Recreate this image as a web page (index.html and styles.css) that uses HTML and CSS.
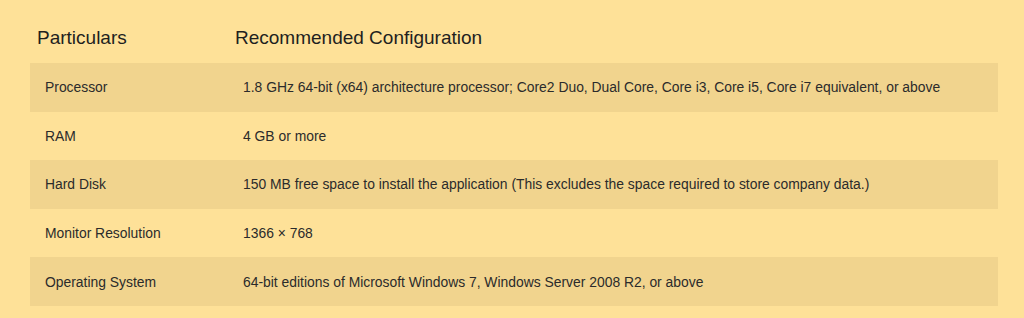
FILE: index.html
```html
<!DOCTYPE html>
<html>
<head>
<meta charset="utf-8">
<link rel="stylesheet" href="styles.css">
</head>
<body>
<div class="page">
  <table class="spec">
    <thead>
      <tr>
        <th class="c1">Particulars</th>
        <th class="c2">Recommended Configuration</th>
      </tr>
    </thead>
    <tbody>
      <tr class="alt"><td class="c1">Processor</td><td class="c2">1.8 GHz 64-bit (x64) architecture processor; Core2 Duo, Dual Core, Core i3, Core i5, Core i7 equivalent, or above</td></tr>
      <tr><td class="c1">RAM</td><td class="c2">4 GB or more</td></tr>
      <tr class="alt"><td class="c1">Hard Disk</td><td class="c2">150 MB free space to install the application (This excludes the space required to store company data.)</td></tr>
      <tr><td class="c1">Monitor Resolution</td><td class="c2">1366 × 768</td></tr>
      <tr class="alt"><td class="c1">Operating System</td><td class="c2">64-bit editions of Microsoft Windows 7, Windows Server 2008 R2, or above</td></tr>
    </tbody>
  </table>
</div>
</body>
</html>
```
FILE: styles.css
```css
html, body {
  margin: 0;
  padding: 0;
  background: #fee198;
}
body {
  font-family: "Liberation Sans", Arial, sans-serif;
  color: #2b2b2b;
  width: 1024px;
  height: 318px;
  overflow: hidden;
}
.page {
  padding: 0 26px 0 30px;
}
.spec {
  width: 968px;
  border-collapse: collapse;
  table-layout: fixed;
}
.spec th {
  font-weight: normal;
  font-size: 19px;
  color: #1f1f1f;
  text-align: left;
  height: 63px;
  padding: 12px 7px 0;
  box-sizing: border-box;
  vertical-align: middle;
}
.spec th.c1 { width: 198px; }
.spec td {
  font-size: 13.88px;
  height: 48.6px;
  padding: 0 15px;
  box-sizing: border-box;
  vertical-align: middle;
}
.spec tr.alt td {
  background: #f1d48e;
}
```
